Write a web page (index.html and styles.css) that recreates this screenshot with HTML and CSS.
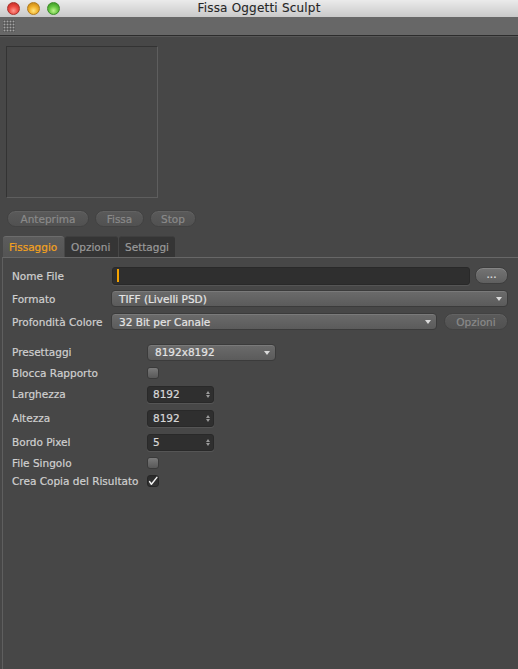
FILE: index.html
```html
<!DOCTYPE html>
<html lang="it">
<head>
<meta charset="utf-8">
<title>Fissa Oggetti Sculpt</title>
<link rel="stylesheet" href="styles.css">
</head>
<body>
<div class="window">
  <div class="titlebar">
    <div class="lights">
      <span class="light red"></span>
      <span class="light yellow"></span>
      <span class="light green"></span>
    </div>
    <div class="title">Fissa Oggetti Sculpt</div>
    <div></div>
  </div>
  <div class="toolbar"><span class="grip"></span></div>
  <div class="content">
    <div class="preview"></div>
    <div class="actions">
      <button class="btn w-anteprima">Anteprima</button>
      <button class="btn w-fissa">Fissa</button>
      <button class="btn w-stop">Stop</button>
    </div>
    <div class="tabs">
      <div class="tab active w-t1">Fissaggio</div>
      <div class="tab w-t2">Opzioni</div>
      <div class="tab w-t3">Settaggi</div>
    </div>
    <div class="panel">
      <div class="upper">
        <div class="row">
          <span class="label">Nome File</span>
          <div class="field grow"><span class="caret"></span></div>
          <button class="btn-light">...</button>
        </div>
        <div class="row">
          <span class="label">Formato</span>
          <div class="select grow"><span>TIFF (Livelli PSD)</span><span class="arrow"></span></div>
        </div>
        <div class="row">
          <span class="label">Profondità Colore</span>
          <div class="select grow"><span>32 Bit per Canale</span><span class="arrow"></span></div>
          <button class="btn w-opzioni">Opzioni</button>
        </div>
      </div>
      <div class="lower">
        <div class="row r-field">
          <span class="label2">Presettaggi</span>
          <div class="select w-preset"><span>8192x8192</span><span class="arrow"></span></div>
        </div>
        <div class="row r-check">
          <span class="label2">Blocca Rapporto</span>
          <span class="check"></span>
        </div>
        <div class="row r-field">
          <span class="label2">Larghezza</span>
          <div class="field num"><span>8192</span><span class="spin"><i class="up"></i><i class="down"></i></span></div>
        </div>
        <div class="row r-field">
          <span class="label2">Altezza</span>
          <div class="field num"><span>8192</span><span class="spin"><i class="up"></i><i class="down"></i></span></div>
        </div>
        <div class="row r-field">
          <span class="label2">Bordo Pixel</span>
          <div class="field num"><span>5</span><span class="spin"><i class="up"></i><i class="down"></i></span></div>
        </div>
        <div class="row r-check">
          <span class="label2">File Singolo</span>
          <span class="check"></span>
        </div>
        <div class="row r-check">
          <span class="label2">Crea Copia del Risultato</span>
          <span class="check checked"><svg width="10" height="10" viewBox="0 0 10 10"><path d="M1.6 5.6 L3.4 8.2 L8.9 1.4" fill="none" stroke="#f2f2f2" stroke-width="1.5" stroke-linecap="round" stroke-linejoin="round"/></svg></span>
        </div>
      </div>
    </div>
  </div>
</div>
</body>
</html>
```

FILE: styles.css
```css
html, body {
  margin: 0;
  padding: 0;
}
body {
  width: 518px;
  height: 669px;
  overflow: hidden;
  background: #474747;
  font-family: "DejaVu Sans", "Liberation Sans", sans-serif;
  font-size: 10.5px;
  color: #d0d0d0;
  -webkit-text-stroke: 0.2px currentColor;
}
.window {
  display: flex;
  flex-direction: column;
  height: 669px;
}
.titlebar {
  height: 17px;
  flex: none;
  display: grid;
  grid-template-columns: 1fr auto 1fr;
  align-items: center;
  background: linear-gradient(#ebebeb, #c9c9c9);
}
.lights {
  display: flex;
  gap: 7px;
  padding-left: 7px;
}
.light {
  width: 13px;
  height: 13px;
  border-radius: 50%;
  box-sizing: border-box;
}
.red { background: radial-gradient(circle at 50% 70%, #ff9a90 0, #ec4b43 45%, #b8231c 100%); border: 1px solid #a8302b; }
.yellow { background: radial-gradient(circle at 50% 70%, #ffe680 0, #f0b02a 45%, #bb7c10 100%); border: 1px solid #b07a1c; }
.green { background: radial-gradient(circle at 50% 70%, #c0f590 0, #66c641 45%, #2f8a1c 100%); border: 1px solid #3c8a28; }
.title {
  font-size: 12px;
  letter-spacing: 0.2px;
  color: #262626;
  line-height: 17px;
  -webkit-text-stroke: 0.1px currentColor;
}
.toolbar {
  height: 18px;
  flex: none;
  background: #676767;
  border-bottom: 1px solid #2c2c2c;
  box-shadow: 0 1px 0 #575757;
  display: flex;
  align-items: center;
  padding-left: 3px;
}
.grip {
  width: 12px;
  height: 12px;
  background-image: radial-gradient(circle, #a5a5a5 0.8px, transparent 1.1px);
  background-size: 3px 3px;
  background-color: #5a5a5a;
}
.content {
  flex: 1;
  display: flex;
  flex-direction: column;
}
.preview {
  width: 150px;
  height: 150px;
  margin: 10px 0 0 6px;
  border-top: 1px solid #333;
  border-left: 1px solid #333;
  border-bottom: 1px solid #5e5e5e;
  border-right: 1px solid #5e5e5e;
}
.actions {
  display: flex;
  gap: 6px;
  margin: 12px 0 0 7px;
}
.btn {
  height: 17px;
  padding: 0;
  font-family: inherit;
  font-size: 10.5px;
  color: #8a8a8a;
  background: linear-gradient(#5a5a5a, #515151);
  border: 1px solid #424242;
  border-radius: 9px;
  box-shadow: inset 0 1px 0 #626262;
}
.w-anteprima { width: 82px; }
.w-fissa { width: 49px; }
.w-stop { width: 46px; }
.tabs {
  display: flex;
  gap: 1px;
  margin: 9px 0 0 3px;
  height: 21px;
}
.tab {
  box-sizing: border-box;
  height: 21px;
  padding: 4px 0 0 6px;
  background: #353535;
  border-top: 1px solid #3f3f3f;
  border-radius: 3px 3px 0 0;
  color: #9a9a9a;
}
.tab.active {
  background: linear-gradient(#5c5c5c, #545454);
  border-top: 1px solid #6c6c6c;
  color: #f4a21e;
}
.w-t1 { width: 61px; }
.w-t2 { width: 53px; }
.w-t3 { width: 56px; }
.panel {
  flex: 1;
  margin-left: 2px;
  border-top: 1px solid #676767;
  border-left: 1px solid #5f5f5f;
  padding: 9px 10px 0 9px;
}
.upper {
  display: flex;
  flex-direction: column;
  gap: 6px;
}
.row {
  display: flex;
  align-items: center;
  height: 17px;
}
.label {
  width: 99px;
  flex: none;
}
.grow { flex: 1; }
.field {
  box-sizing: border-box;
  height: 17px;
  background: #2f2f2f;
  border: 1px solid #292929;
  border-radius: 3px;
  box-shadow: 0 1px 0 #555;
  display: flex;
  align-items: center;
}
.upper .field { height: 18px; margin-left: 1px; }
.caret {
  width: 2px;
  height: 13px;
  background: #f5a300;
  margin-left: 4px;
}
.btn-light {
  width: 33px;
  height: 17px;
  margin-left: 5px;
  padding: 0 0 3px;
  font-family: inherit;
  font-size: 10.5px;
  color: #e0e0e0;
  background: linear-gradient(#747474, #5f5f5f);
  border: 1px solid #3e3e3e;
  border-radius: 8px;
  box-shadow: inset 0 1px 0 #858585;
}
.select {
  box-sizing: border-box;
  height: 17px;
  display: flex;
  align-items: center;
  justify-content: space-between;
  padding: 0 5px 0 7px;
  background: linear-gradient(#6b6b6b, #5b5b5b);
  border: 1px solid #3b3b3b;
  border-radius: 4px;
  box-shadow: inset 0 1px 0 #7a7a7a;
  color: #e4e4e4;
}
.arrow {
  width: 0;
  height: 0;
  border-left: 3.5px solid transparent;
  border-right: 3.5px solid transparent;
  border-top: 4px solid #dadada;
  margin-top: 1px;
}
.w-opzioni {
  width: 64px;
  margin-left: 7px;
  height: 17px;
}
.lower {
  display: flex;
  flex-direction: column;
  gap: 6px;
  margin-top: 13px;
}
.r-field { height: 18px; }
.r-check { height: 12px; }
.label2 {
  width: 135px;
  flex: none;
}
.w-preset { width: 129px; height: 17px; }
.num {
  width: 67px;
  justify-content: space-between;
  padding: 0 3px 0 5px;
  color: #d8d8d8;
}
.spin {
  display: flex;
  flex-direction: column;
  gap: 1px;
}
.spin i {
  display: block;
  width: 0;
  height: 0;
  border-left: 2.5px solid transparent;
  border-right: 2.5px solid transparent;
}
.spin .up { border-bottom: 3px solid #9a9a9a; }
.spin .down { border-top: 3px solid #9a9a9a; }
.check {
  box-sizing: border-box;
  width: 12px;
  height: 12px;
  border-radius: 3px;
  background: linear-gradient(#7a7a7a, #585858);
  border: 1px solid #3a3a3a;
  display: flex;
  align-items: center;
  justify-content: center;
}
.check.checked {
  background: linear-gradient(#2a2a2a, #343434);
  border-color: #262626;
}
```
